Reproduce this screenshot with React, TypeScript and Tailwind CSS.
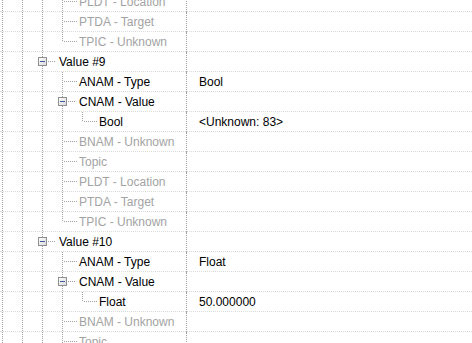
import React from "react";

type Node = "tee" | "ell" | "box";

type Row = {
  depth: number; // number of ancestor guide columns
  node: Node;
  label: string;
  dim?: boolean;
  value?: string;
};

const ROWS: Row[] = [
  { depth: 3, node: "tee", label: "PLDT - Location", dim: true },
  { depth: 3, node: "tee", label: "PTDA - Target", dim: true },
  { depth: 3, node: "ell", label: "TPIC - Unknown", dim: true },
  { depth: 2, node: "box", label: "Value #9" },
  { depth: 3, node: "tee", label: "ANAM - Type", value: "Bool" },
  { depth: 3, node: "box", label: "CNAM - Value" },
  { depth: 4, node: "ell", label: "Bool", value: "<Unknown: 83>" },
  { depth: 3, node: "tee", label: "BNAM - Unknown", dim: true },
  { depth: 3, node: "tee", label: "Topic", dim: true },
  { depth: 3, node: "tee", label: "PLDT - Location", dim: true },
  { depth: 3, node: "tee", label: "PTDA - Target", dim: true },
  { depth: 3, node: "ell", label: "TPIC - Unknown", dim: true },
  { depth: 2, node: "box", label: "Value #10" },
  { depth: 3, node: "tee", label: "ANAM - Type", value: "Float" },
  { depth: 3, node: "box", label: "CNAM - Value" },
  { depth: 4, node: "ell", label: "Float", value: "50.000000" },
  { depth: 3, node: "tee", label: "BNAM - Unknown", dim: true },
  { depth: 3, node: "tee", label: "Topic", dim: true },
];

const LINE = "#a0a0a0";

function Guide() {
  return (
    <svg width="20" height="20" className="shrink-0 block" shapeRendering="crispEdges">
      <line x1="10.5" y1="0" x2="10.5" y2="20" stroke={LINE} strokeDasharray="1 1" />
    </svg>
  );
}

function NodeGlyph({ kind }: { kind: Node }) {
  return (
    <svg width="27" height="20" className="shrink-0 block" shapeRendering="crispEdges">
      <defs>
        <linearGradient id="bx" x1="0" y1="0" x2="1" y2="1">
          <stop offset="0" stopColor="#ffffff" />
          <stop offset="1" stopColor="#d8d8d8" />
        </linearGradient>
      </defs>
      {kind === "ell" ? (
        <line x1="10.5" y1="0" x2="10.5" y2="10" stroke={LINE} strokeDasharray="1 1" />
      ) : (
        <line x1="10.5" y1="0" x2="10.5" y2="20" stroke={LINE} strokeDasharray="1 1" />
      )}
      {kind === "box" ? (
        <>
          <line x1="16" y1="9.5" x2="24" y2="9.5" stroke={LINE} strokeDasharray="1 1" />
          <rect x="6.5" y="5.5" width="8" height="8" fill="url(#bx)" stroke="#8f8f8f" />
          <line x1="8" y1="9.5" x2="13" y2="9.5" stroke="#3d5a9e" />
        </>
      ) : (
        <line x1="12" y1="9.5" x2="25" y2="9.5" stroke={LINE} strokeDasharray="1 1" />
      )}
    </svg>
  );
}

export default function App() {
  return (
    <div className="w-[472px] h-[343px] overflow-hidden bg-white font-['Liberation_Sans',Arial,sans-serif] text-[12px]">
      <div className="-mt-[8px] flex flex-col">
        {ROWS.map((r, i) => (
          <div key={i} className="flex h-[20px] shrink-0 border-b border-dotted border-[#dcdcdc]">
            <div className="w-[186px] shrink-0 h-[19px] flex items-start overflow-visible">
              <div className="-ml-[8px] flex items-start">
                {Array.from({ length: r.depth }).map((_, k) => (
                  <Guide key={k} />
                ))}
                <NodeGlyph kind={r.node} />
              </div>
              <span
                className={`pt-[1px] leading-[19px] whitespace-nowrap ${r.dim ? "text-[#a3a3a3]" : "text-black"}`}
              >
                {r.label}
              </span>
            </div>
            <div className="flex-1 h-[20px] -mb-[1px] border-l border-dotted border-[#a0a0a0] pl-[12px] pt-[1px] leading-[19px] text-black whitespace-nowrap">
              {r.value}
            </div>
          </div>
        ))}
      </div>
    </div>
  );
}
